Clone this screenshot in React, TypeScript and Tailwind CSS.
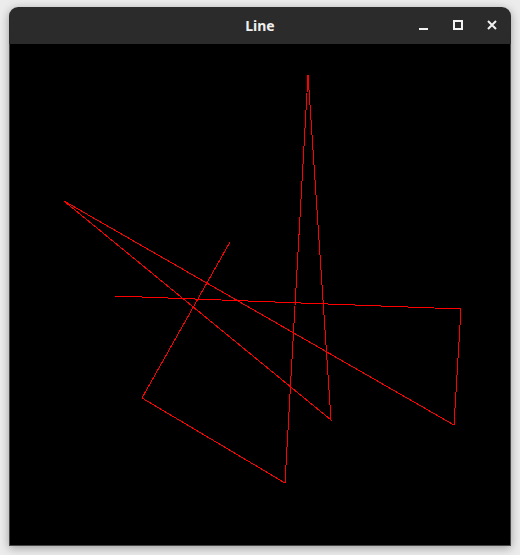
const points: [number, number][] = [
  [220, 198],
  [132, 354],
  [275, 439],
  [298, 31],
  [321, 376],
  [54, 157],
  [444, 381],
  [451, 265],
  [105, 252],
];

function TitleButtons() {
  return (
    <div className="absolute right-0 top-0 flex h-full items-center">
      <div className="flex h-[24px] w-[34px] items-center justify-center">
        <svg width="12" height="12" viewBox="0 0 12 12">
          <rect x="1" y="8" width="9" height="2" fill="#f2f2f2" />
        </svg>
      </div>
      <div className="flex h-[24px] w-[34px] items-center justify-center">
        <svg width="12" height="12" viewBox="0 0 12 12">
          <rect x="2" y="1" width="8" height="8" fill="none" stroke="#f2f2f2" strokeWidth="2" />
        </svg>
      </div>
      <div className="mr-[2px] flex h-[24px] w-[34px] items-center justify-center">
        <svg width="12" height="12" viewBox="0 0 12 12">
          <path d="M2 1 L10 9 M10 1 L2 9" stroke="#f2f2f2" strokeWidth="2" />
        </svg>
      </div>
    </div>
  );
}

export default function App() {
  return (
    <div className="h-[555px] w-[520px] bg-[#ececec] pl-[9px] pt-[7px]">
      <div className="w-[502px] rounded-t-[9px] shadow-[0_2px_10px_rgba(0,0,0,0.35)]">
        <div className="relative flex h-[37px] items-center justify-center rounded-t-[9px] bg-[#2b2b2b]">
          <span className="text-[14px] font-bold text-[#efefef] [font-family:'Noto_Sans',sans-serif]">
            Line
          </span>
          <TitleButtons />
        </div>
        <div className="border-x border-b border-[#454545] bg-black">
          <svg width="500" height="501" viewBox="0 0 500 501" className="block" shapeRendering="crispEdges">
            <polyline
              points={points.map((p) => p.join(",")).join(" ")}
              fill="none"
              stroke="#ff0000"
              strokeWidth="1"
            />
          </svg>
        </div>
      </div>
    </div>
  );
}
